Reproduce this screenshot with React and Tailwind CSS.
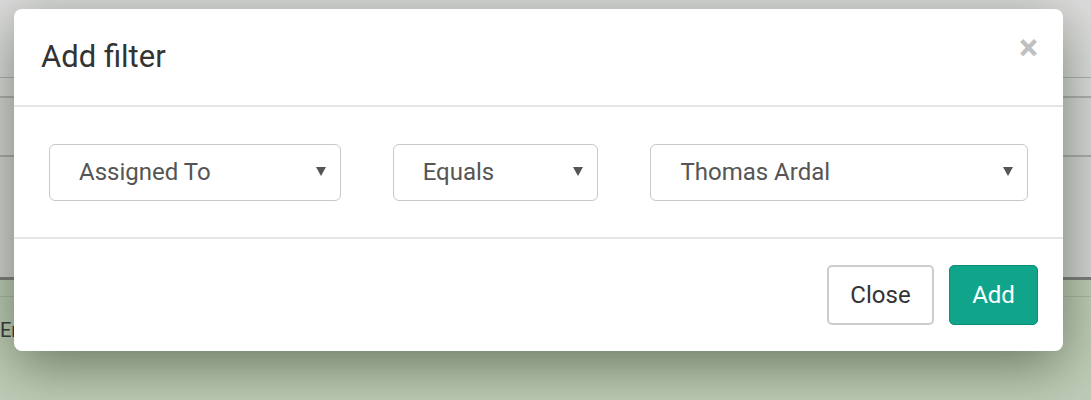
import React from "react";

const selects = [
  { label: "Assigned To", width: "w-[292px]" },
  { label: "Equals", width: "w-[206px]" },
  { label: "Thomas Ardal", width: "w-[378px]" },
];

function FakeSelect({ label, width }) {
  return (
    <div
      className={`${width} h-[57px] flex items-center justify-between pl-[29px] pr-[14px] border-[1.5px] border-[#c8c8c8] rounded-[6px] bg-white text-[24px] text-[#555555]`}
    >
      <span>{label}</span>
      <svg width="10" height="10" viewBox="0 0 10 10" className="mb-[2px]">
        <path d="M0 1 L10 1 L5 10 Z" fill="#555555" />
      </svg>
    </div>
  );
}

export default function App() {
  return (
    <div
      className="relative h-[400px] w-full overflow-hidden"
      style={{ fontFamily: "Roboto, 'Liberation Sans', sans-serif" }}
    >
      {/* page behind the dialog */}
      <div className="h-[277px] bg-[#dddddd] flex flex-col">
        <div className="h-[77px]" />
        <div className="h-[1px] bg-[#a9b1b5]" />
        <div className="h-[18px]" />
        <div className="h-[2px] bg-[#b0b0b0]" />
        <div className="h-[57px] bg-[#d8d8d8]" />
        <div className="h-[2px] bg-[#acacac]" />
        <div className="flex-1 bg-[#d6d6d6]" />
      </div>
      <div className="h-[3px] bg-[#7c7c7c]" />
      <div className="h-[120px] bg-[#bfcdb8]">
        <div className="h-[17px] border-b border-[#a9b8a2]" />
        <div className="mt-[18px] text-[20px] text-[#333333]">Errors</div>
      </div>

      {/* dialog */}
      <div className="absolute left-[14px] top-[9px] w-[1049px] rounded-[8px] bg-white shadow-[0_15px_55px_rgba(50,65,40,0.6)]">
        <div className="h-[98px] flex items-center justify-between px-[27px] border-b-2 border-[#e5e5e5]">
          <h4 className="text-[31px] text-[#333333] leading-none mb-[2px]">Add filter</h4>
          <span className="text-[36px] font-bold text-[#c0c0c0] leading-none mr-[-2px] mb-[18px]">×</span>
        </div>
        <div className="h-[132px] flex items-center gap-[52px] px-[35px] border-b-2 border-[#e5e5e5]">
          {selects.map((s) => (
            <FakeSelect key={s.label} label={s.label} width={s.width} />
          ))}
        </div>
        <div className="h-[112px] flex items-center justify-end gap-[15px] pr-[25px]">
          <button className="w-[107px] h-[60px] rounded-[5px] border-2 border-[#cccccc] bg-white text-[24px] text-[#333333]">
            Close
          </button>
          <button className="w-[89px] h-[60px] rounded-[5px] border border-[#0b8e78] bg-[#10a58b] text-[24px] text-white">
            Add
          </button>
        </div>
      </div>
    </div>
  );
}
